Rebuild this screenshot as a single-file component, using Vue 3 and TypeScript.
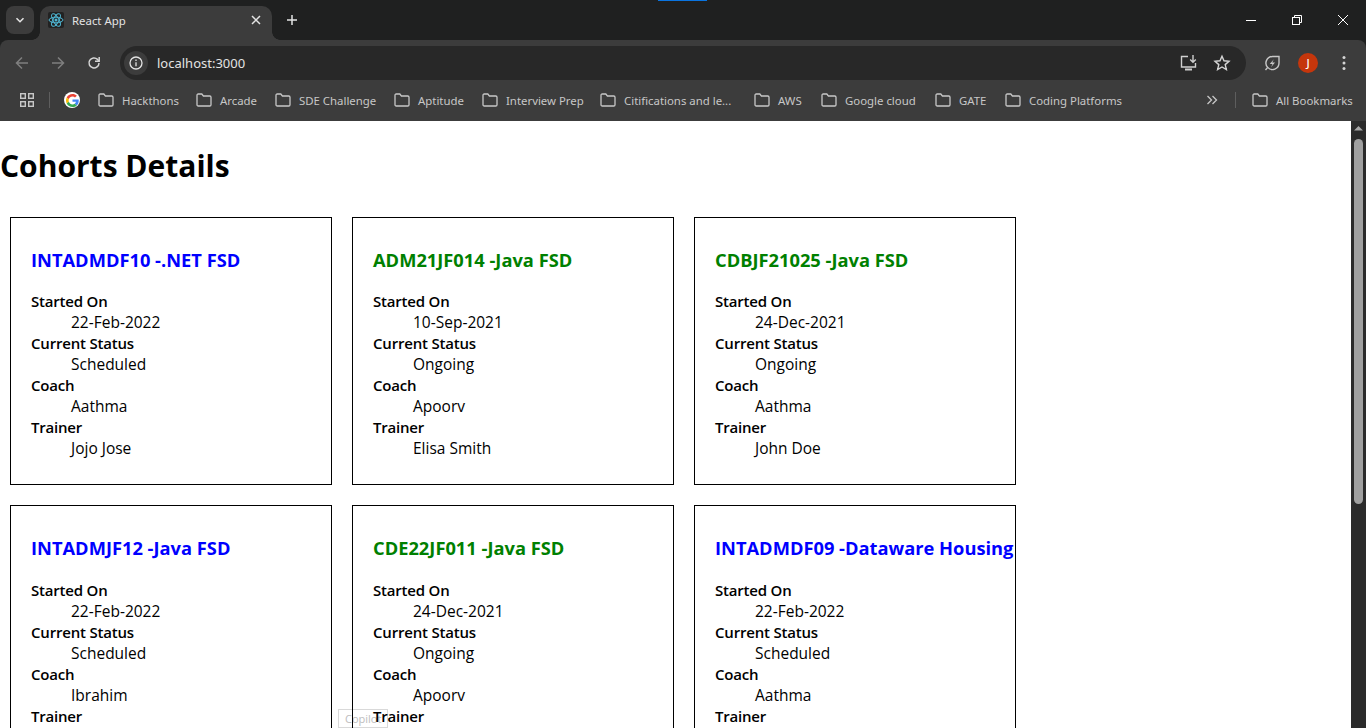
<script setup lang="ts">
interface Cohort {
  code: string;
  name: string;
  startedOn: string;
  status: string;
  coach: string;
  trainer: string;
}

const cohorts: Cohort[] = [
  { code: "INTADMDF10", name: ".NET FSD", startedOn: "22-Feb-2022", status: "Scheduled", coach: "Aathma", trainer: "Jojo Jose" },
  { code: "ADM21JF014", name: "Java FSD", startedOn: "10-Sep-2021", status: "Ongoing", coach: "Apoorv", trainer: "Elisa Smith" },
  { code: "CDBJF21025", name: "Java FSD", startedOn: "24-Dec-2021", status: "Ongoing", coach: "Aathma", trainer: "John Doe" },
  { code: "INTADMJF12", name: "Java FSD", startedOn: "22-Feb-2022", status: "Scheduled", coach: "Ibrahim", trainer: "Nithin" },
  { code: "CDE22JF011", name: "Java FSD", startedOn: "24-Dec-2021", status: "Ongoing", coach: "Apoorv", trainer: "Elisa Smith" },
  { code: "INTADMDF09", name: "Dataware Housing", startedOn: "22-Feb-2022", status: "Scheduled", coach: "Aathma", trainer: "Jojo Jose" },
];

const bookmarks = [
  { label: "Hackthons", width: 98 },
  { label: "Arcade", width: 79 },
  { label: "SDE Challenge", width: 119 },
  { label: "Aptitude", width: 88 },
  { label: "Interview Prep", width: 118 },
  { label: "Citifications and le...", width: 154 },
  { label: "AWS", width: 67 },
  { label: "Google cloud", width: 114 },
  { label: "GATE", width: 70 },
  { label: "Coding Platforms", width: 130 },
];
</script>

<template>
  <div class="window">
    <div class="tabstrip">
      <div class="loading"></div>
      <button class="tab-search">
        <svg width="12" height="12" viewBox="0 0 12 12"><path d="M2.5 4.2 6 7.7l3.5-3.5" fill="none" stroke="#e3e3e3" stroke-width="1.6" /></svg>
      </button>
      <div class="tab">
        <span class="favicon">
          <svg width="16" height="16" viewBox="0 0 16 16" fill="none" stroke="#4fb6d3" stroke-width="1">
            <ellipse cx="8" cy="8" rx="7" ry="2.8" />
            <ellipse cx="8" cy="8" rx="7" ry="2.8" transform="rotate(60 8 8)" />
            <ellipse cx="8" cy="8" rx="7" ry="2.8" transform="rotate(120 8 8)" />
            <circle cx="8" cy="8" r="1.5" fill="#4fb6d3" stroke="none" />
          </svg>
        </span>
        <span class="tab-title">React App</span>
        <svg class="tab-close" width="10" height="10" viewBox="0 0 10 10"><path d="M1 1l8 8M9 1 1 9" stroke="#e3e3e3" stroke-width="1.5" /></svg>
      </div>
      <svg class="new-tab" width="12" height="12" viewBox="0 0 12 12"><path d="M6 1v10M1 6h10" stroke="#e3e3e3" stroke-width="1.5" /></svg>
      <div class="win-controls">
        <svg width="46" height="12" viewBox="0 0 46 12"><path d="M18 6.5h10" stroke="#fff" /></svg>
        <svg width="46" height="12" viewBox="0 0 46 12" fill="none" stroke="#fff"><rect x="18.5" y="3.5" width="7" height="7" /><path d="M20.5 3.5v-2h7v7h-2" /></svg>
        <svg width="46" height="12" viewBox="0 0 46 12"><path d="M18 1l10 10M28 1 18 11" stroke="#fff" /></svg>
      </div>
    </div>

    <div class="toolbar">
      <svg class="nav" width="16" height="16" viewBox="0 0 16 16" fill="none" stroke="#7f7f7f" stroke-width="1.5"><path d="M14 8H2.5M8 2.5 2.5 8 8 13.5" /></svg>
      <svg class="nav" width="16" height="16" viewBox="0 0 16 16" fill="none" stroke="#7f7f7f" stroke-width="1.5"><path d="M2 8h11.5M8 2.500 13.500 8 8 13.500" /></svg>
      <svg class="nav" width="16" height="16" viewBox="0 0 16 16" fill="none" stroke="#d5d5d5" stroke-width="1.5"><path d="M13 8a5 5 0 1 1-1.500-3.600L13 6" /><path d="M13.200 2v4.200H9" /></svg>
      <div class="omnibox">
        <span class="site-info">
          <svg width="16" height="16" viewBox="0 0 16 16" fill="none" stroke="#e3e3e3" stroke-width="1.3"><circle cx="8" cy="8" r="6" /><path d="M8 7.200v4M8 4.600v1.400" /></svg>
        </span>
        <span class="url">localhost:3000</span>
        <svg class="install" width="20" height="18" viewBox="0 0 20 18" fill="none" stroke="#cfcfcf" stroke-width="1.4"><path d="M9 2.500H2.500v10.500h14V9" /><path d="M14 1v7M11.200 5.500 14 8.200l2.800-2.700" /><path d="M6 15.500h7" stroke-width="2" /></svg>
        <svg class="star" width="18" height="18" viewBox="0 0 18 18" fill="none" stroke="#d5d5d5" stroke-width="1.4"><path d="m9 2.200 2 4.600 5 .5-3.800 3.300 1.200 4.900L9 13l-4.400 2.500 1.200-4.900L2 7.300l5-.5z" /></svg>
      </div>
      <svg class="leaf" width="18" height="18" viewBox="0 0 18 18" fill="none" stroke="#c7c7c7" stroke-width="1.4">
        <path d="M16 2.500V9a6.500 6.500 0 0 1-11.300 4.400A6.500 6.500 0 0 1 9.500 2.500z" />
        <path d="M4.700 13.400 2.500 16" />
        <path d="M10.800 5.200 6.800 10h2.700L8 13.200 12 8.400H9.300z" fill="#c7c7c7" stroke="none" />
      </svg>
      <span class="avatar">J</span>
      <svg class="menu" width="4" height="16" viewBox="0 0 4 16" fill="#d5d5d5"><circle cx="2" cy="2.500" r="1.500" /><circle cx="2" cy="8" r="1.500" /><circle cx="2" cy="13.500" r="1.500" /></svg>
    </div>

    <div class="bookmarks">
      <svg class="apps" width="16" height="16" viewBox="0 0 16 16" fill="none" stroke="#c7c7c7" stroke-width="1.400"><rect x="1.700" y="1.700" width="4.600" height="4.600" /><rect x="9.700" y="1.700" width="4.600" height="4.600" /><rect x="1.700" y="9.700" width="4.600" height="4.600" /><rect x="9.700" y="9.700" width="4.600" height="4.600" /></svg>
      <span class="sep"></span>
      <span class="google">
        <svg width="13" height="13" viewBox="0 0 48 48">
          <path fill="#EA4335" d="M24 9.500c3.500 0 6.700 1.200 9.200 3.600l6.900-6.900C35.900 2.400 30.500 0 24 0 14.600 0 6.500 5.400 2.600 13.200l8 6.200C12.500 13.700 17.800 9.500 24 9.500z" />
          <path fill="#4285F4" d="M47 24.500c0-1.600-.1-3.100-.4-4.500H24v9h12.900c-.6 3-2.200 5.500-4.800 7.200l7.700 6C44.300 38 47 31.800 47 24.500z" />
          <path fill="#FBBC05" d="M10.500 28.600c-.5-1.400-.8-3-.8-4.600s.3-3.200.8-4.600l-8-6.200C.9 16.500 0 20.100 0 24s.9 7.500 2.600 10.800l7.900-6.200z" />
          <path fill="#34A853" d="M24 48c6.500 0 11.900-2.100 15.900-5.800l-7.700-6c-2.200 1.400-4.900 2.300-8.200 2.300-6.200 0-11.500-4.200-13.400-9.900l-8 6.200C6.500 42.600 14.600 48 24 48z" />
        </svg>
      </span>
      <div v-for="b in bookmarks" :key="b.label" class="bookmark" :style="{ width: b.width + 'px' }">
        <svg width="16" height="14" viewBox="0 0 16 14" fill="none" stroke="#c7c7c7" stroke-width="1.300"><path d="M1 2.200C1 1.500 1.500 1 2.200 1h3.600l1.600 2h6.400c.7 0 1.200.5 1.200 1.200v7.600c0 .7-.5 1.200-1.200 1.200H2.200C1.500 13 1 12.500 1 11.800z" /></svg>
        <span>{{ b.label }}</span>
      </div>
      <svg class="more" width="12" height="10" viewBox="0 0 12 10" fill="none" stroke="#c7c7c7" stroke-width="1.300"><path d="m1.500 1 4 4-4 4M6.500 1l4 4-4 4" /></svg>
      <span class="sep end"></span>
      <div class="bookmark all">
        <svg width="16" height="14" viewBox="0 0 16 14" fill="none" stroke="#c7c7c7" stroke-width="1.300"><path d="M1 2.200C1 1.500 1.500 1 2.200 1h3.600l1.600 2h6.400c.7 0 1.200.5 1.200 1.200v7.600c0 .7-.5 1.200-1.200 1.200H2.200C1.500 13 1 12.500 1 11.800z" /></svg>
        <span>All Bookmarks</span>
      </div>
    </div>

    <div class="viewport">
      <main class="page">
        <h1>Cohorts Details</h1>
        <div class="cards">
          <div v-for="c in cohorts" :key="c.code" class="card">
            <h3 :class="c.status === 'Ongoing' ? 'ongoing' : 'scheduled'">{{ c.code }} -{{ c.name }}</h3>
            <dl>
              <dt>Started On</dt>
              <dd>{{ c.startedOn }}</dd>
              <dt>Current Status</dt>
              <dd>{{ c.status }}</dd>
              <dt>Coach</dt>
              <dd>{{ c.coach }}</dd>
              <dt>Trainer</dt>
              <dd>{{ c.trainer }}</dd>
            </dl>
          </div>
        </div>
      </main>
      <div class="scrollbar">
        <svg width="15" height="15" viewBox="0 0 15 15"><path d="M3 9.500h9L7.500 5z" fill="#a6a6a6" /></svg>
        <div class="thumb"></div>
      </div>
      <div class="copilot">Copilot</div>
    </div>
  </div>
</template>

<style>
html,
body {
  margin: 0;
  overflow: hidden;
}
</style>

<style scoped>
.window {
  height: 100vh;
  display: flex;
  flex-direction: column;
  font-family: "Open Sans", "Noto Sans", sans-serif;
  background: #1f2020;
}

.tabstrip {
  position: relative;
  flex: 0 0 40px;
  display: flex;
  align-items: flex-end;
  background: #1f2020;
  box-sizing: border-box;
  padding-left: 6px;
}
.loading {
  position: absolute;
  left: 658px;
  top: 0;
  width: 49px;
  height: 1px;
  background: #0a74e0;
}
.tab-search {
  width: 28px;
  height: 28px;
  margin-bottom: 6px;
  padding: 0;
  border: 0;
  border-radius: 8px;
  background: #3c3c3c;
  display: flex;
  align-items: center;
  justify-content: center;
}
.tab {
  position: relative;
  width: 232px;
  height: 34px;
  margin-left: 6px;
  box-sizing: border-box;
  padding: 0 10px 6px 8px;
  display: flex;
  align-items: center;
  background: #3c3c3c;
  border-radius: 10px 10px 0 0;
}
/* concave flares where the active tab runs into the toolbar */
.tab::before,
.tab::after {
  content: "";
  position: absolute;
  bottom: 0;
  width: 8px;
  height: 8px;
}
.tab::before {
  left: -8px;
  background: radial-gradient(circle at 0 0, transparent 7.5px, #3c3c3c 8px);
}
.tab::after {
  right: -8px;
  background: radial-gradient(circle at 100% 0, transparent 7.5px, #3c3c3c 8px);
}
.favicon {
  width: 16px;
  height: 16px;
  display: flex;
  background: #222;
  border-radius: 2px;
}
.tab-title {
  flex: 1;
  margin-left: 8px;
  font-family: "Noto Sans", sans-serif;
  font-size: 11.4px;
  color: #e3e3e3;
}
.tab-close {
  margin-right: 1px;
}
.new-tab {
  margin: 0 0 14px 14px;
}
.win-controls {
  margin-left: auto;
  height: 40px;
  display: flex;
  align-items: center;
}

.toolbar {
  flex: 0 0 40px;
  display: flex;
  align-items: center;
  background: #3c3c3c;
  border-radius: 8px 8px 0 0;
  padding: 6px 0 0 14px;
  box-sizing: border-box;
}
.nav {
  margin-right: 20px;
}
.nav:nth-of-type(3) {
  margin-right: 18px;
}
.omnibox {
  width: 1126px;
  height: 34px;
  box-sizing: border-box;
  padding: 0 15px 0 4px;
  display: flex;
  align-items: center;
  background: #282828;
  border-radius: 17px;
}
.site-info {
  width: 24px;
  height: 24px;
  border-radius: 50%;
  background: #3c3c3c;
  display: flex;
  align-items: center;
  justify-content: center;
}
.url {
  flex: 1;
  margin-left: 9px;
  font-family: "Noto Sans", sans-serif;
  font-size: 13px;
  color: #e3e3e3;
}
.install {
  margin-right: 14px;
}
.leaf {
  margin-left: 17px;
}
.avatar {
  margin-left: 17px;
  width: 20px;
  height: 20px;
  border-radius: 50%;
  background: #c5360c;
  color: #fff;
  font-family: "Noto Sans", sans-serif;
  font-size: 11px;
  font-weight: 500;
  line-height: 20px;
  text-align: center;
}
.menu {
  margin-left: 24px;
}

.bookmarks {
  flex: 0 0 41px;
  box-sizing: border-box;
  display: flex;
  align-items: center;
  padding: 0 0 1px 19px;
  background: #3c3c3c;
  font-family: "Noto Sans", sans-serif;
  font-size: 11.4px;
  color: #c7c7c7;
}
.sep {
  width: 1px;
  height: 16px;
  margin: 0 14px;
  background: #5e5e5e;
}
.sep.end {
  margin: 0 16px 0 17px;
}
.google {
  width: 16px;
  height: 16px;
  margin-right: 18px;
  border-radius: 50%;
  background: #fff;
  display: flex;
  align-items: center;
  justify-content: center;
}
.bookmark {
  display: flex;
  align-items: center;
  gap: 8px;
  white-space: nowrap;
  flex: none;
}
.more {
  margin-left: 71px;
}

.viewport {
  position: relative;
  isolation: isolate;
  flex: 1;
  min-height: 0;
  display: flex;
  overflow: hidden;
  background: #fff;
}
.page {
  flex: 1;
  min-width: 0;
  color: #000;
}
h1 {
  margin: 23.44px 0 19.44px;
  font-size: 30px;
  line-height: 43px;
  font-weight: 700;
}
.cards {
  display: flex;
  flex-wrap: wrap;
}
.card {
  width: 280px;
  margin: 10px;
  padding: 10px 20px;
  border: 1px solid #000;
}
h3 {
  margin: 18.72px 0;
  font-size: 18.3px;
  line-height: 25px;
  font-weight: 700;
  white-space: nowrap;
}
h3.scheduled {
  color: #0000ff;
}
h3.ongoing {
  color: #008000;
}
dl {
  margin: 19.72px 0 15px;
  line-height: 21px;
}
dt {
  font-size: 15px;
  font-weight: 600;
  letter-spacing: -0.2px;
}
dd {
  margin-left: 40px;
  font-size: 15.5px;
}
.scrollbar {
  flex: 0 0 15px;
  background: #2b2b2b;
  display: flex;
  flex-direction: column;
  align-items: center;
}
.thumb {
  width: 9px;
  height: 365px;
  margin-top: 3px;
  border-radius: 5px;
  background: #a0a0a0;
}
.copilot {
  position: absolute;
  left: 338px;
  top: 588px;
  z-index: -1;
  border: 1px solid #d9d9d9;
  padding: 0 6px;
  font-size: 11px;
  line-height: 17px;
  color: #bdbdbd;
}
</style>
